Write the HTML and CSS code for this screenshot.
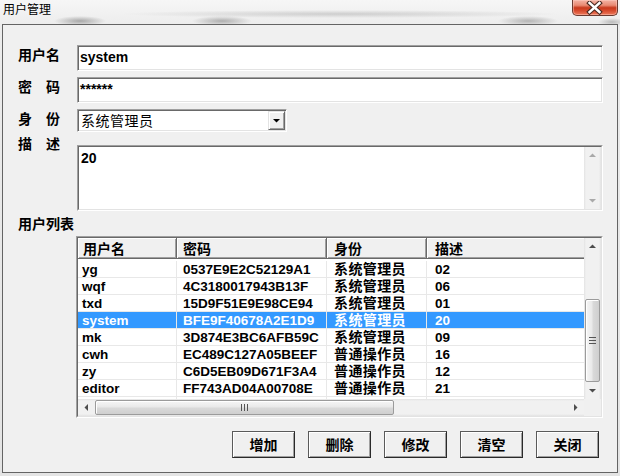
FILE: index.html
```html
<!DOCTYPE html>
<html>
<head>
<meta charset="utf-8">
<title>用户管理</title>
<link rel="stylesheet" href="styles.css">
</head>
<body>
<div class="window">
  <div class="titlebar">
    <span class="title">用户管理</span>
    <div class="close">
      <svg width="44" height="14" viewBox="0 0 44 14">
        <path d="M16.5 2 L26.5 11 M26.5 2 L16.5 11" stroke="#4b2a22" stroke-width="4.6" stroke-linecap="square"/>
        <path d="M16.5 2 L26.5 11 M26.5 2 L16.5 11" stroke="#ffffff" stroke-width="2.4" stroke-linecap="square"/>
      </svg>
    </div>
  </div>
  <div class="client">
    <div class="row row-user">
      <span class="lbl">用户名</span>
      <div class="input">system</div>
    </div>
    <div class="row row-pwd">
      <span class="lbl">密　码</span>
      <div class="input">******</div>
    </div>
    <div class="row row-role">
      <span class="lbl">身　份</span>
      <div class="combo">
        <span class="combo-text">系统管理员</span>
        <span class="combo-btn"><svg width="15" height="17" viewBox="0 0 15 17"><path d="M4 7 H11 L7.5 10.5 Z" fill="#000"/></svg></span>
      </div>
    </div>
    <div class="row row-desc">
      <span class="lbl lbl-desc">描　述</span>
      <div class="memo">
        <div class="memo-inner">
          <div class="memo-text">20</div>
          <div class="vscroll disabled">
            <div class="sb-btn"><svg width="17" height="17" viewBox="0 0 17 17"><path d="M5 10 H12 L8.5 6.5 Z" fill="#a9a9a9"/></svg></div>
            <div class="sb-track"></div>
            <div class="sb-btn"><svg width="17" height="17" viewBox="0 0 17 17"><path d="M5 7 H12 L8.5 10.5 Z" fill="#a9a9a9"/></svg></div>
          </div>
        </div>
      </div>
    </div>
    <div class="section">用户列表</div>
    <div class="listview">
      <div class="lv-inner">
        <div class="lv-body">
          <div class="lv-head">
            <div class="hc c1">用户名</div>
            <div class="hc c2">密码</div>
            <div class="hc c3">身份</div>
            <div class="hc c4">描述</div>
          </div>
          <div class="lv-rows">
            <div class="lv-row"><div class="c c1">yg</div><div class="c c2">0537E9E2C52129A1</div><div class="c c3 cjk">系统管理员</div><div class="c c4">02</div></div>
            <div class="lv-row"><div class="c c1">wqf</div><div class="c c2">4C3180017943B13F</div><div class="c c3 cjk">系统管理员</div><div class="c c4">06</div></div>
            <div class="lv-row"><div class="c c1">txd</div><div class="c c2">15D9F51E9E98CE94</div><div class="c c3 cjk">系统管理员</div><div class="c c4">01</div></div>
            <div class="lv-row sel"><div class="c c1">system</div><div class="c c2">BFE9F40678A2E1D9</div><div class="c c3 cjk">系统管理员</div><div class="c c4">20</div></div>
            <div class="lv-row"><div class="c c1">mk</div><div class="c c2">3D874E3BC6AFB59C</div><div class="c c3 cjk">系统管理员</div><div class="c c4">09</div></div>
            <div class="lv-row"><div class="c c1">cwh</div><div class="c c2">EC489C127A05BEEF</div><div class="c c3 cjk">普通操作员</div><div class="c c4">16</div></div>
            <div class="lv-row"><div class="c c1">zy</div><div class="c c2">C6D5EB09D671F3A4</div><div class="c c3 cjk">普通操作员</div><div class="c c4">12</div></div>
            <div class="lv-row"><div class="c c1">editor</div><div class="c c2">FF743AD04A00708E</div><div class="c c3 cjk">普通操作员</div><div class="c c4">21</div></div>
            <div class="lv-row"><div class="c c1"></div><div class="c c2"></div><div class="c c3"></div><div class="c c4"></div></div>
          </div>
        </div>
        <div class="vscroll">
          <div class="sb-btn"><svg width="17" height="17" viewBox="0 0 17 17"><path d="M5 10 H12 L8.5 6.5 Z" fill="#4d4d4d"/></svg></div>
          <div class="sb-track">
            <div class="thumb-v">
              <svg width="8" height="7" viewBox="0 0 8 7"><path d="M0 0.5 H7 M0 3.5 H7 M0 6.5 H7" stroke="#555" stroke-width="1"/></svg>
            </div>
          </div>
          <div class="sb-btn"><svg width="17" height="17" viewBox="0 0 17 17"><path d="M5 7 H12 L8.5 10.5 Z" fill="#4d4d4d"/></svg></div>
        </div>
        <div class="hscroll">
          <div class="sb-btn"><svg width="17" height="17" viewBox="0 0 17 17"><path d="M10 5 V12 L6.5 8.5 Z" fill="#4d4d4d"/></svg></div>
          <div class="sb-track-h">
            <div class="thumb-h">
              <svg width="7" height="8" viewBox="0 0 7 8"><path d="M0.5 0 V7 M3.5 0 V7 M6.5 0 V7" stroke="#555" stroke-width="1"/></svg>
            </div>
          </div>
          <div class="sb-btn"><svg width="17" height="17" viewBox="0 0 17 17"><path d="M7 5 V12 L10.5 8.5 Z" fill="#4d4d4d"/></svg></div>
        </div>
        <div class="corner"></div>
      </div>
    </div>
    <div class="buttons">
      <div class="btn">增加</div>
      <div class="btn">删除</div>
      <div class="btn">修改</div>
      <div class="btn">清空</div>
      <div class="btn">关闭</div>
    </div>
  </div>
</div>
</body>
</html>
```

FILE: styles.css
```css
* { box-sizing: border-box; }
html, body { margin: 0; padding: 0; background: #ececec; }

.window {
  width: 620px;
  height: 476px;
  overflow: hidden;
  font-family: "Liberation Sans", "Noto Sans CJK SC", sans-serif;
  color: #000;
  background:
    radial-gradient(ellipse 26px 5px at 80px 21px, rgba(110,110,110,.55), rgba(110,110,110,0)),
    radial-gradient(ellipse 30px 5px at 222px 21px, rgba(110,110,110,.5), rgba(110,110,110,0)),
    radial-gradient(ellipse 220px 4px at 340px 14px, rgba(140,140,140,.35), rgba(140,140,140,0)),
    radial-gradient(ellipse 30px 5px at 528px 21px, rgba(110,110,110,.45), rgba(110,110,110,0)),
    radial-gradient(ellipse 14px 4px at 612px 22px, rgba(110,110,110,.4), rgba(110,110,110,0)),
    linear-gradient(#f6f6f6, #ececec 26px, #e4e4e4);
}

.titlebar {
  height: 24px;
  display: flex;
  justify-content: space-between;
  align-items: flex-start;
}
.title {
  font: 12px/12px "Noto Sans CJK SC", sans-serif;
  margin: 3px 0 0 3px;
  color: #000;
}
.close {
  width: 46px;
  height: 16px;
  margin-right: 2px;
  border: 1px solid #6b3b31;
  border-top: none;
  border-radius: 0 0 5px 5px;
  background: linear-gradient(#f3b2a4 0, #e98b74 35%, #c8391d 52%, #d64a2d 70%, #ee7a5c 100%);
  box-shadow: inset 0 0 0 1px rgba(255,210,200,.45);
  display: flex;
  align-items: center;
  justify-content: center;
}
.close svg { display: block; }

.client {
  margin-left: 2px;
  width: 616px;
  height: 449px;
  border: 1px solid #646464;
  background: #f0f0f0;
  padding-left: 15px;
}

.row { display: flex; align-items: flex-start; }
.lbl {
  width: 59px;
  flex: none;
  font: bold 14px/14px "Noto Sans CJK SC", sans-serif;
  margin-top: 2px;
}
.row-user { padding-top: 20px; }
.row-pwd { margin-top: 6px; }
.row-role { margin-top: 6px; }
.row-desc { margin-top: 13px; }
.lbl-desc { margin-top: -9px; }

.input {
  width: 526px;
  height: 26px;
  background: #fff;
  border: 1px solid;
  border-color: #a0a0a0 #fff #fff #a0a0a0;
  box-shadow: inset 1px 1px 0 #696969, inset -1px -1px 0 #e3e3e3;
  padding: 3px 0 0 2px;
  font: bold 14px/16px "Liberation Sans", sans-serif;
}

.combo {
  width: 210px;
  height: 23px;
  background: #fff;
  border: 1px solid;
  border-color: #a0a0a0 #fff #fff #a0a0a0;
  box-shadow: inset 1px 1px 0 #696969, inset -1px -1px 0 #e3e3e3;
  padding: 1px;
  display: flex;
  justify-content: space-between;
}
.combo-text {
  padding-left: 2px;
  font: 14px/19px "Noto Sans CJK SC", sans-serif;
  letter-spacing: 0.5px;
}
.combo-btn {
  width: 17px;
  height: 19px;
  background: #f0f0f0;
  border: 1px solid;
  border-color: #e3e3e3 #696969 #696969 #e3e3e3;
  box-shadow: inset 1px 1px 0 #fff, inset -1px -1px 0 #a0a0a0;
}
.combo-btn svg { display: block; }

.memo {
  width: 526px;
  height: 66px;
  border: 1px solid;
  border-color: #a0a0a0 #fff #fff #a0a0a0;
}
.memo-inner {
  height: 100%;
  border: 1px solid;
  border-color: #696969 #e3e3e3 #e3e3e3 #696969;
  background: #fff;
  display: flex;
}
.memo-text {
  flex: 1;
  padding: 3px 0 0 2px;
  font: bold 14px/16px "Liberation Sans", sans-serif;
}

.section {
  margin-top: 5px;
  font: bold 14px/14px "Noto Sans CJK SC", sans-serif;
}

.listview {
  margin: 6px 0 0 58px;
  width: 527px;
  height: 182px;
  border: 1px solid;
  border-color: #a0a0a0 #fff #fff #a0a0a0;
}
.lv-inner {
  height: 100%;
  border: 1px solid;
  border-color: #696969 #e3e3e3 #e3e3e3 #696969;
  display: grid;
  grid-template-columns: 506px 17px;
  grid-template-rows: 161px 17px;
  background: #fff;
}
.lv-body {
  overflow: hidden;
  background: #fff;
  font: bold 13.5px/15px "Liberation Sans", "Noto Sans CJK SC", sans-serif;
}
.lv-head { display: flex; height: 21px; width: 560px; }
.hc {
  flex: none;
  height: 21px;
  background: #f0f0f0;
  border-right: 1px solid #696969;
  border-bottom: 1px solid #696969;
  box-shadow: inset 1px 1px 0 #fff, inset -1px -1px 0 #a0a0a0;
  font: bold 14px/20px "Noto Sans CJK SC", sans-serif;
  white-space: nowrap;
}
.lv-rows { padding-top: 2px; width: 560px; }
.lv-row { display: flex; height: 17px; }
.c {
  flex: none;
  height: 17px;
  padding-top: 1px;
  border-right: 1px solid #e8e8e8;
  border-bottom: 1px solid #e8e8e8;
  white-space: nowrap;
  overflow: hidden;
}
.c1 { width: 99px; padding-left: 4px; }
.c2 { width: 150px; padding-left: 6px; }
.c3 { width: 100px; padding-left: 7px; }
.c4 { width: 160px; padding-left: 8px; }
.cjk { font-size: 14px; letter-spacing: 0.4px; }
.hc.c1 { padding-left: 5px; }
.lv-row.sel .c { background: #3399ff; color: #fff; }

.vscroll {
  display: flex;
  flex-direction: column;
  width: 17px;
  background: linear-gradient(to right, #e3e3e3, #f1f1f1 2px, #f1f1f1 15px, #e3e3e3);
}
.vscroll.disabled { flex: none; height: 100%; }
.vscroll.disabled .sb-track { padding: 0; }
.sb-btn { width: 17px; height: 17px; flex: none; }
.sb-btn svg { display: block; }
.sb-track { flex: 1; min-height: 0; padding: 44px 1px 0 1px; }
.thumb-v {
  height: 83px;
  border: 1px solid #9b9b9b;
  border-radius: 2px;
  background: linear-gradient(to right, #f6f6f6, #e9e9e9 45%, #d9d9d9 55%, #cfcfcf);
  box-shadow: inset 1px 1px 0 #fff;
  display: flex;
  align-items: center;
  justify-content: center;
}
.thumb-v svg, .thumb-h svg { display: block; }

.hscroll {
  display: flex;
  height: 17px;
  background: linear-gradient(#e3e3e3, #f1f1f1 2px, #f1f1f1 15px, #e3e3e3);
}
.sb-track-h { flex: 1; padding: 1px 0; }
.thumb-h {
  width: 299px;
  height: 15px;
  border: 1px solid #9b9b9b;
  border-radius: 2px;
  background: linear-gradient(#f6f6f6, #e9e9e9 45%, #d9d9d9 55%, #cfcfcf);
  box-shadow: inset 1px 1px 0 #fff;
  display: flex;
  align-items: center;
  justify-content: center;
}
.corner { background: #f0f0f0; }

.buttons {
  margin-top: 13px;
  display: flex;
  justify-content: flex-end;
  gap: 13px;
  padding-right: 18px;
}
.btn {
  width: 63px;
  height: 27px;
  background: #f0f0f0;
  border: 1px solid #5a5a5a;
  border-right-color: #2a2a2a;
  border-bottom-color: #2a2a2a;
  box-shadow: inset 1px 1px 0 #fff, inset -1px -1px 0 #a0a0a0;
  font: bold 14px/25px "Noto Sans CJK SC", sans-serif;
  text-align: center;
}
```
